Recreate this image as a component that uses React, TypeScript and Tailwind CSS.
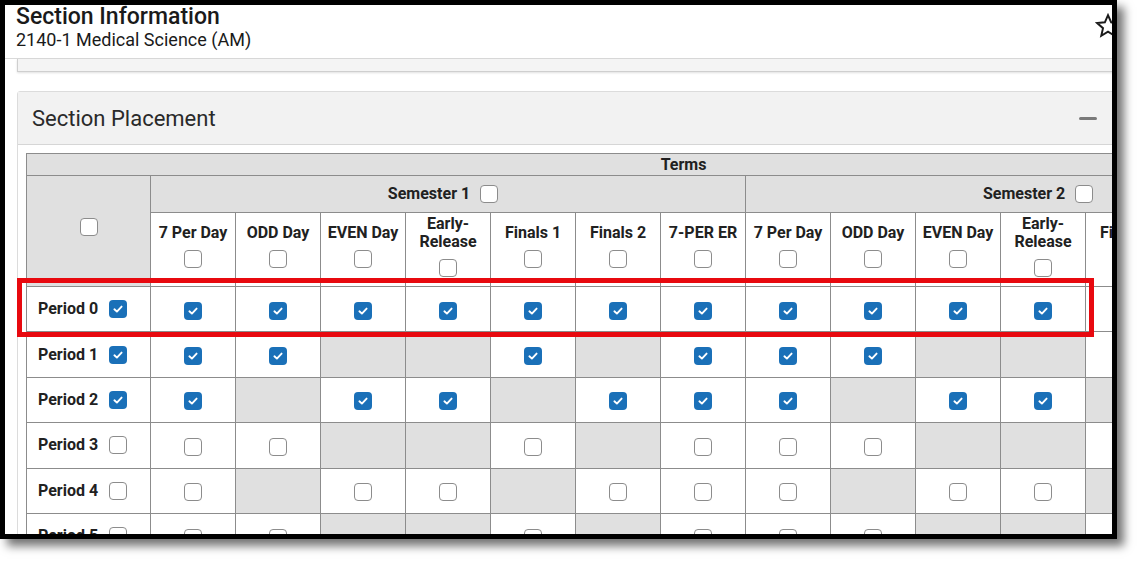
import React from "react";

function Box({ checked }: { checked: boolean }) {
  if (checked) {
    return (
      <span className="inline-flex items-center justify-center w-[18px] h-[18px] rounded-[4px] bg-[#1a70b8] shrink-0 align-middle">
        <svg width="12" height="12" viewBox="0 0 12 12">
          <path d="M2.4 6.3 L4.9 8.6 L9.6 3.6" stroke="white" strokeWidth="1.9" fill="none" strokeLinecap="round" strokeLinejoin="round" />
        </svg>
      </span>
    );
  }
  return <span className="inline-block w-[18px] h-[18px] rounded-[4px] border border-[#8c8c8c] bg-white shrink-0 align-middle" />;
}

const cols = ["7 Per Day", "ODD Day", "EVEN Day", "Early-Release", "Finals 1", "Finals 2", "7-PER ER"];

const rows: { label: string; checked: boolean; cells: string }[] = [
  { label: "Period 0", checked: true, cells: "cccccccccccccc" },
  { label: "Period 1", checked: true, cells: "ccggcgcccggcgc" },
  { label: "Period 2", checked: true, cells: "cgccgcccgccgcc" },
  { label: "Period 3", checked: false, cells: "uugguguuuggugu" },
  { label: "Period 4", checked: false, cells: "uguuguuuguuguu" },
  { label: "Period 5", checked: false, cells: "uugguguuuggugu" },
];

const bd = "border border-[#8c8c8c]";

export default function App() {
  return (
    <div className="relative w-[1142px] h-[564px] bg-white overflow-hidden font-['Roboto',sans-serif] text-[#212121]">
      <div className="w-[1117px] h-[539px] border-[5px] border-black bg-white overflow-hidden shadow-[7px_7px_9px_rgba(0,0,0,0.55)]">
        {/* header */}
        <div className="h-[54px] border-b border-[#d9d9d9] flex items-start pl-[11px]">
          <div className="flex flex-col">
            <div className="text-[23px] leading-[24px] font-medium text-[#1a1a1a]">Section Information</div>
            <div className="text-[18px] leading-[22px] text-[#1a1a1a]">2140-1 Medical Science (AM)</div>
          </div>
          <svg className="ml-auto mt-[8px] mr-[-9px] shrink-0" width="26" height="26" viewBox="0 0 24 24">
            <polygon
              points="12,2 14.9,8.6 22,9.3 16.6,14 18.2,21 12,17.3 5.8,21 7.4,14 2,9.3 9.1,8.6"
              fill="white"
              stroke="#1a1a1a"
              strokeWidth="1.8"
              strokeLinejoin="miter"
            />
          </svg>
        </div>
        {/* previous card bottom */}
        <div className="ml-[12px] w-[1110px] h-[13px] bg-[#f4f4f4] border-l border-b border-[#cfcfcf] shadow-[0_1px_2px_rgba(0,0,0,0.12)]" />
        {/* Section Placement card */}
        <div className="ml-[12px] mt-[19px] w-[1098px] border border-[#dcdcdc] rounded-[3px] bg-white">
          <div className="h-[53px] bg-[#f2f2f2] border-b border-[#d6d6d6] flex items-center justify-between pl-[14px] pr-[17px]">
            <span className="text-[22px] text-[#2a2a2a]">Section Placement</span>
            <span className="block w-[18px] h-[3px] rounded-full bg-[#7a7a7a]" />
          </div>
          <div className="pl-[8px] pt-[8px] overflow-hidden">
            <table className="border-collapse table-fixed w-[1314px] text-[16px] font-bold">
              <colgroup>
                <col className="w-[124px]" />
                {Array.from({ length: 14 }).map((_, i) => (
                  <col key={i} className="w-[85px]" />
                ))}
              </colgroup>
              <tbody>
                <tr className="h-[22px]">
                  <td colSpan={15} className={`${bd} bg-[#e0e0e0] text-center leading-[18px] p-0`}>
                    Terms
                  </td>
                </tr>
                <tr className="h-[37px]">
                  <td rowSpan={2} className={`${bd} bg-[#e0e0e0] text-center align-middle p-0`}>
                    <div className="flex justify-center pb-[8px]">
                      <Box checked={false} />
                    </div>
                  </td>
                  {["Semester 1", "Semester 2"].map((s) => (
                    <td key={s} colSpan={7} className={`${bd} bg-[#e0e0e0] p-0 align-middle`}>
                      <div className="flex items-center justify-center gap-[10px] pr-[10px] leading-[18px]">
                        <span>{s}</span>
                        <Box checked={false} />
                      </div>
                    </td>
                  ))}
                </tr>
                <tr className="h-[74px]">
                  {[...cols, ...cols].map((c, i) => (
                    <td key={i} className={`${bd} bg-white p-0 px-[3px] align-middle`}>
                      <div className="flex flex-col items-center text-center leading-[18px]">
                        <span>{c}</span>
                        <span className="mt-[8px] mb-[8px] flex">
                          <Box checked={false} />
                        </span>
                      </div>
                    </td>
                  ))}
                </tr>
                {rows.map((r) => (
                  <tr key={r.label} className="h-[45.4px]">
                    <td className={`${bd} bg-white p-0 align-middle`}>
                      <div className="flex items-center pl-[11px] gap-[11px] leading-[18px]">
                        <span>{r.label}</span>
                        <Box checked={r.checked} />
                      </div>
                    </td>
                    {r.cells.split("").map((c, i) => (
                      <td
                        key={i}
                        className={`${bd} p-0 align-middle ${c === "g" ? "bg-[#e0e0e0]" : "bg-white"}`}
                      >
                        {c !== "g" && (
                          <div className="flex justify-center pt-[3px]">
                            <Box checked={c === "c"} />
                          </div>
                        )}
                      </td>
                    ))}
                  </tr>
                ))}
              </tbody>
            </table>
          </div>
        </div>
      </div>
      {/* red annotation */}
      <div className="absolute left-[17px] top-[278px] w-[1077px] h-[59px] border-[5px] border-[#e8090f]" />
    </div>
  );
}
